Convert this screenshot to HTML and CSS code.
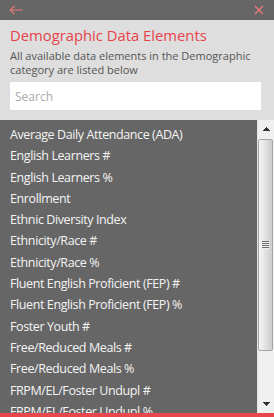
FILE: index.html
```
<!DOCTYPE html>
<html lang="en">
<head>
    <meta charset="UTF-8">
    <meta name="viewport" content="width=device-width, initial-scale=1.0">
    <title>Demographic Data Elements</title>
    <link rel="stylesheet" href="styles.css">
</head>
<body>
    <div class="panel">
        <div class="topbar">
            <svg class="icon-back" width="14" height="10" viewBox="0 0 14 10">
                <path d="M13.5 5H1.2M5.5 0.8L1.2 5l4.3 4.2" fill="none" stroke="#f07a78" stroke-width="1.1"/>
            </svg>
            <svg class="icon-close" width="10" height="10" viewBox="0 0 10 10">
                <path d="M1 1l8 8M9 1l-8 8" fill="none" stroke="#f07a78" stroke-width="1.3"/>
            </svg>
        </div>
        <div class="intro">
            <h2>Demographic Data Elements</h2>
            <p>All available data elements in the Demographic category are listed below</p>
            <input type="text" class="search" placeholder="Search">
        </div>
        <div class="list-wrap">
            <ul class="elements">
                <li>Average Daily Attendance (ADA)</li>
                <li>English Learners #</li>
                <li>English Learners %</li>
                <li>Enrollment</li>
                <li>Ethnic Diversity Index</li>
                <li>Ethnicity/Race #</li>
                <li>Ethnicity/Race %</li>
                <li>Fluent English Proficient (FEP) #</li>
                <li>Fluent English Proficient (FEP) %</li>
                <li>Foster Youth #</li>
                <li>Free/Reduced Meals #</li>
                <li>Free/Reduced Meals %</li>
                <li>FRPM/EL/Foster Undupl #</li>
                <li>FRPM/EL/Foster Undupl %</li>
            </ul>
            <div class="scrollbar">
                <div class="scroll-btn up"></div>
                <div class="scroll-track">
                    <div class="scroll-thumb"><span class="grip"></span></div>
                </div>
                <div class="scroll-btn down"></div>
            </div>
        </div>
        <div class="footer-line"></div>
    </div>
</body>
</html>
```
FILE: styles.css
```
body {
    margin: 0;
    padding: 0;
    font-family: "Open Sans", sans-serif;
    background-color: #666;
}
.panel {
    width: 274px;
    height: 417px;
    display: flex;
    flex-direction: column;
}
.topbar {
    height: 20px;
    flex-shrink: 0;
    background-color: #666;
    display: flex;
    justify-content: space-between;
    align-items: center;
    padding: 0 10px 0 9px;
}
.intro {
    background-color: #dedede;
    padding: 5px 13px 10px 10px;
}
.intro h2 {
    margin: 0;
    font-size: 14.8px;
    line-height: 20px;
    font-weight: normal;
    color: #e8434b;
    white-space: nowrap;
}
.intro p {
    margin: 4px 0 5px 0;
    font-size: 11px;
    line-height: 14px;
    color: #555;
}
.search {
    display: block;
    width: 100%;
    box-sizing: border-box;
    height: 28px;
    border: none;
    padding: 0 5px;
    font-family: inherit;
    font-size: 12px;
    font-stretch: 88%;
    background-color: white;
    outline: none;
}
.search::placeholder {
    color: #aaa;
}
.list-wrap {
    flex: 1;
    min-height: 0;
    display: flex;
}
.elements {
    flex: 1;
    margin: 0;
    padding: 4px 0 0 0;
    list-style: none;
    overflow: hidden;
    background-color: #666;
}
.elements li {
    padding-left: 10px;
    font-size: 12.5px;
    letter-spacing: -0.4px;
    line-height: 21.3px;
    color: #f4f4f4;
    white-space: nowrap;
}
.scrollbar {
    width: 17px;
    display: flex;
    flex-direction: column;
    background-color: #f0f0f0;
    border-left: 1px solid #e4e4e4;
    box-sizing: border-box;
}
.scroll-btn {
    height: 18px;
    flex-shrink: 0;
    background-size: 7px 4px;
    background-position: center;
    background-repeat: no-repeat;
}
.scroll-btn.up {
    background-image: conic-gradient(from 139deg at 50% 0, #333 0 82deg, transparent 82deg);
}
.scroll-btn.down {
    background-image: conic-gradient(from -41deg at 50% 100%, #333 0 82deg, transparent 82deg);
}
.scroll-track {
    flex: 1;
    padding-top: 1px;
}
.scroll-thumb {
    height: 212px;
    margin-right: 1px;
    box-sizing: border-box;
    border: 1px solid #a6a6a6;
    border-radius: 2px;
    background: linear-gradient(to right, #f6f6f6, #e0e0e0 55%, #cdcdcd);
    display: flex;
    align-items: center;
    justify-content: center;
}
.grip {
    width: 7px;
    height: 8px;
    background: repeating-linear-gradient(to bottom, #6d6d6d 0 1px, #f2f2f2 1px 2px);
}
.footer-line {
    height: 4px;
    flex-shrink: 0;
    background-color: #e8474d;
}
```
